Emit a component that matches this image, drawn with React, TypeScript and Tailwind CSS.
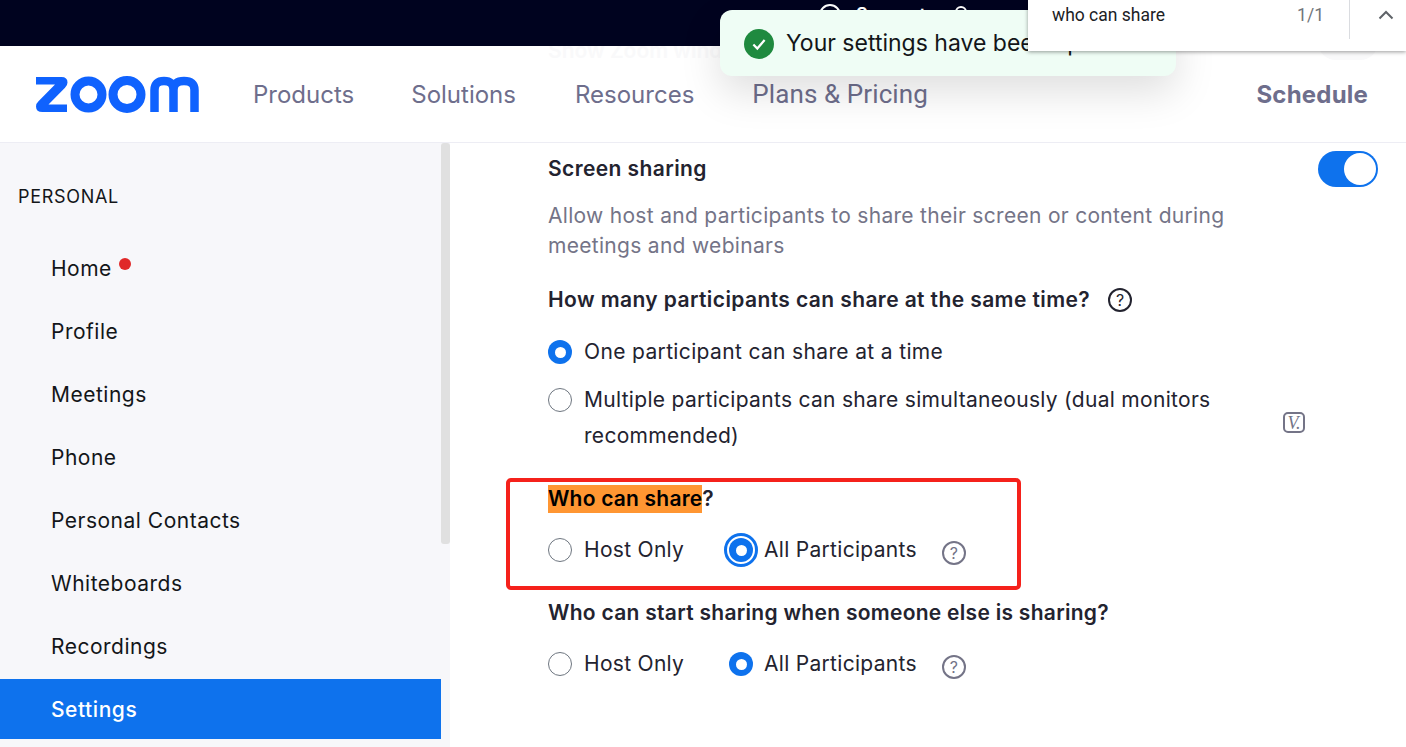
const navLinks = [
  { label: 'Products', cls: 'ml-[54px]' },
  { label: 'Solutions', cls: 'ml-[57px]' },
  { label: 'Resources', cls: 'ml-[59px]' },
]

const sideLinks = ['Home', 'Profile', 'Meetings', 'Phone', 'Personal Contacts', 'Whiteboards', 'Recordings']

function ZoomLogo() {
  return (
    <svg width="163" height="37" viewBox="0 0 163 37" fill="none" className="shrink-0">
      <path d="M0 1h25.5q6 0 6 5.5 0 3-2.5 5.2L12.5 28.5H31V36H6.5Q0 36 0 30.5q0-3 2.5-5.2L19 8.5H0Z" fill="#0f62fe" />
      <circle cx="52.5" cy="18.5" r="13.5" stroke="#0f62fe" stroke-width="9" />
      <circle cx="91" cy="18.5" r="14" stroke="#0f62fe" stroke-width="9" />
      <path d="M118.5 36V14q0-9 9.5-9t9.5 9v22M137.5 14q0-9 10.5-9t10.5 9v22" stroke="#0f62fe" stroke-width="8.5" />
    </svg>
  )
}

function HelpIcon({ muted = false, className = '' }: { muted?: boolean; className?: string }) {
  return (
    <span
      className={`inline-flex h-[24px] w-[24px] shrink-0 items-center justify-center rounded-full border-2 text-[16px] font-normal leading-none tracking-normal ${
        muted ? 'border-[#747487] text-[#747487]' : 'border-[#23232f] text-[#23232f]'
      } ${className}`}
    >
      ?
    </span>
  )
}

function Radio({ checked = false, focused = false }: { checked?: boolean; focused?: boolean }) {
  if (checked) {
    return (
      <span
        className={`flex h-[24px] w-[24px] shrink-0 items-center justify-center rounded-full bg-[#0e72ed] ${
          focused ? 'outline-[3px] outline-offset-[2px] outline-[#0e72ed]' : ''
        }`}
      >
        <span className="h-[11px] w-[11px] rounded-full bg-white" />
      </span>
    )
  }
  return <span className="block h-[24px] w-[24px] shrink-0 rounded-full border border-[#6e7680] bg-white" />
}

function HostChoice({ focused = false }: { focused?: boolean }) {
  return (
    <div className="flex items-center text-[21px] leading-[30px] tracking-[0.3px] text-[#23232f]">
      <Radio />
      <span className="ml-[12px] w-[145px]">Host Only</span>
      <Radio checked focused={focused} />
      <span className="ml-[11px]">All Participants</span>
      <HelpIcon muted className="ml-[25px] mt-[5px]" />
    </div>
  )
}

export default function App() {
  return (
    <div className="relative flex h-[747px] w-[1406px] flex-col overflow-hidden bg-white font-['Inter',sans-serif]">
      <div className="relative z-10 h-[46px] shrink-0 bg-[#00031f]">
        <span className="absolute left-[819px] top-[4px] h-[22px] w-[22px] rounded-full border-2 border-white" />
        <span className="absolute left-[856px] top-[1px] text-[18px] font-semibold text-white">Support</span>
        <span className="absolute left-[955px] top-[6px] h-[12px] w-[12px] rounded-full border-2 border-white" />
      </div>

      <header className="relative flex h-[97px] shrink-0 items-center overflow-hidden border-b border-[#ededf4] bg-white pl-[36px] pr-[38px] pt-[1px] text-[24px] text-[#6e6e8c]">
        <span className="absolute left-[548px] top-[-11px] whitespace-nowrap text-[21px] font-semibold text-[#f9f9fa]">
          Show Zoom windows during screen share
        </span>
        <span className="absolute left-[1318px] top-[-22px] h-[36px] w-[60px] rounded-full bg-[#f9f9fa]" />
        <ZoomLogo />
        {navLinks.map((link) => (
          <span key={link.label} className={`relative ${link.cls}`}>
            {link.label}
          </span>
        ))}
        <span className="relative ml-[58px] font-['Roboto',sans-serif] text-[26px] tracking-[0.1px]">Plans &amp; Pricing</span>
        <span className="relative ml-auto font-bold tracking-[0.2px]">Schedule</span>
      </header>

      <div className="flex min-h-0 flex-1">
        <aside className="relative flex w-[450px] shrink-0 flex-col bg-[#f7f7fa] pr-[9px]">
          <div className="absolute right-0 top-0 h-[401px] w-[9px] rounded-[3px] bg-[#e0e0e0]" />
          <p className="pl-[18px] pt-[43px] text-[18px] leading-[22px] tracking-[0.7px] text-[#131619]">PERSONAL</p>
          <nav className="mt-[30px] flex flex-col">
            {sideLinks.map((item) => (
              <div key={item} className="flex h-[63px] items-center pb-[2px] pl-[51px] text-[21px] tracking-[0.5px] text-[#131619]">
                {item}
                {item === 'Home' && <span className="mb-[10px] ml-[7px] h-[12px] w-[12px] rounded-full bg-[#e02828]" />}
              </div>
            ))}
            <div className="flex h-[60px] items-center bg-[#0e72ed] pl-[51px] pt-[2px] text-[21px] font-medium tracking-[0.55px] text-white">
              Settings
            </div>
          </nav>
        </aside>

        <main className="relative flex-1 pl-[98px] pr-[28px]">
          <div className="flex items-start justify-between pt-[8px]">
            <h3 className="pt-[3px] text-[21px] font-semibold leading-[30px] tracking-[0.4px] text-[#23232f]">Screen sharing</h3>
            <div className="flex h-[36px] w-[60px] items-center justify-end rounded-full bg-[#0e72ed] pr-[2px]">
              <span className="h-[32px] w-[32px] rounded-full bg-white" />
            </div>
          </div>
          <p className="mt-[14px] w-[700px] text-[21px] leading-[30px] tracking-[0.3px] text-[#747487]">
            Allow host and participants to share their screen or content during meetings and webinars
          </p>

          <div className="mt-[24px] flex items-center text-[21px] font-semibold leading-[30px] tracking-[0.4px] text-[#23232f]">
            How many participants can share at the same time?
            <HelpIcon className="ml-[18px]" />
          </div>

          <div className="mt-[22px] flex items-center text-[21px] leading-[30px] tracking-[0.35px] text-[#23232f]">
            <Radio checked />
            <span className="ml-[12px]">One participant can share at a time</span>
          </div>

          <div className="relative mt-[15px] flex items-start text-[21px] leading-[36px] tracking-[0.3px] text-[#23232f]">
            <span className="mt-[6px] flex shrink-0">
              <Radio />
            </span>
            <span className="ml-[12px] w-[680px]">Multiple participants can share simultaneously (dual monitors recommended)</span>
            <span className="absolute left-[735px] top-[30px] flex h-[21px] w-[22px] items-center justify-center rounded-[5px] border-2 border-[#747487] font-['Liberation_Serif',serif] text-[18px] italic leading-none tracking-normal text-[#747487]">
              V.
            </span>
          </div>

          <div className="relative mt-[31px]">
            <div className="absolute left-[-42px] top-[-7px] h-[112px] w-[515px] rounded-[5px] border-[4px] border-[#f5211b]" />
            <h3 className="text-[21px] font-semibold leading-[28px] tracking-[0.2px] text-[#23232f]">
              <span className="inline-block bg-[#ff9632] text-black">Who can share</span>?
            </h3>
            <div className="mt-[22px]">
              <HostChoice focused />
            </div>
          </div>

          <h3 className="mt-[34px] text-[21px] font-semibold leading-[28px] tracking-[0.28px] text-[#23232f]">
            Who can start sharing when someone else is sharing?
          </h3>
          <div className="mt-[22px]">
            <HostChoice />
          </div>
        </main>
      </div>

      <div className="absolute left-[720px] top-[10px] z-20 flex h-[66px] w-[456px] items-center rounded-[12px] bg-[#effdf5] pl-[24px] pt-[1px] text-[23px] text-[#131619] shadow-[0_16px_40px_rgba(0,0,0,0.13)]">
        <span className="flex h-[30px] w-[30px] items-center justify-center rounded-full bg-[#1f8a3f]">
          <svg width="18" height="18" viewBox="0 0 16 16" fill="none">
            <path d="M3 8.5l3.5 3.5L13 4.5" stroke="white" stroke-width="2" />
          </svg>
        </span>
        <span className="ml-[12px] whitespace-nowrap">Your settings have been updated</span>
      </div>

      <div className="absolute right-0 top-0 z-30 flex h-[51px] w-[378px] items-start bg-white pl-[24px] font-['Roboto',sans-serif] text-[17.5px] text-[#202124] shadow-[0_1px_4px_rgba(0,0,0,0.4)]">
        <span className="mt-[2px]">who can share</span>
        <span className="ml-auto mt-[2px] text-[#70757a]">1/1</span>
        <span className="ml-[25px] h-[39px] w-px bg-[#dadce0]" />
        <svg width="16" height="10" viewBox="0 0 16 10" fill="none" className="ml-[28px] mr-[12px] mt-[10px]">
          <path d="M1.5 8.5L8 2l6.5 6.5" stroke="#5f6368" stroke-width="2" />
        </svg>
      </div>
    </div>
  )
}
